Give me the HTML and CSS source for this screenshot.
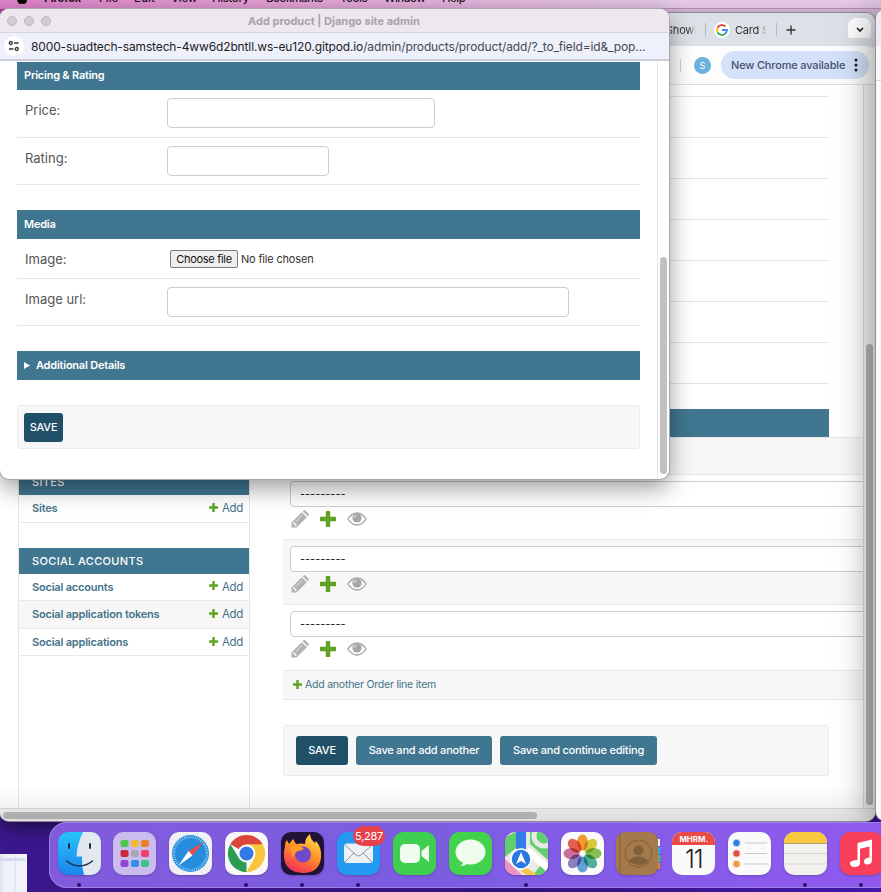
FILE: index.html
```
<!DOCTYPE html>
<html lang="en">
<head>
<meta charset="utf-8">
<title>Add product | Django site admin</title>
<link rel="stylesheet" href="styles.css">
</head>
<body>
<svg width="0" height="0" class="defs" aria-hidden="true">
  <defs>
    <symbol id="plus" viewBox="0 0 16 16"><path fill="#5fa225" d="M6.300 0h3.400q.5 0 .5.500v5.300h5.300q.5 0 .5.500v3.400q0 .5-.5.500h-5.300v5.300q0 .5-.5.500H6.300q-.5 0-.5-.5v-5.300H.5q-.5 0-.5-.5V6.300q0-.5.5-.5h5.300V.5q0-.5.5-.5z"/></symbol>
    <symbol id="pencil" viewBox="0 0 18 18"><path fill="#b2b2b2" d="M.5 12.500 10.800 2.200l5 5L5.500 17.500H.5zM11.700 1.300l.8-.8q.9-.9 1.800 0L17.500 3.700q.9.900 0 1.800l-.8.800z"/><path d="m4.500 12 7-7" stroke="#e8e8e8" fill="none"/><path d="M2 13v1.200h1.800V16H5l1-1-3-3z" fill="#f4f4f4"/></symbol>
    <symbol id="eye" viewBox="0 0 20 14"><path d="M.8 7Q5 1 10 1T19.200 7Q15 13 10 13T.8 7z" fill="none" stroke="#a5a5a5" stroke-width="1.300"/><circle cx="10" cy="6" r="4.600" fill="#a5a5a5"/><path d="M7.300 6q0-2.500 2.500-2.800" stroke="#eee" stroke-width=".9" fill="none"/></symbol>
  </defs>
</svg>
<div class="desktop">
  <nav class="menubar">
    <svg class="apple" width="10" height="12" viewBox="0 0 10 12"><path d="M5 3C3 2 0 3 0 6.500S2 12 3.500 12 5 11.500 6.500 12 10 10 10 8Q8 7 8 5.500T9.500 3.500Q8 2 5 3z"/></svg>
    <b>Firefox</b><span>File</span><span>Edit</span><span>View</span><span>History</span><span>Bookmarks</span><span>Tools</span><span>Window</span><span>Help</span>
  </nav>
  <div class="thumb"></div>

  <section class="browser">
    <header class="tabs">
      <span class="tab showing">Showing</span><i class="sep"></i>
      <svg class="google" width="12" height="12" viewBox="0 0 12 12" fill="none" stroke-width="2"><path d="M9.500 2.500A5 5 0 0 0 1.500 3.800" stroke="#ea4335"/><path d="M1.500 3.800a5 5 0 0 0 0 4.400" stroke="#fbbc05"/><path d="M1.500 8.200a5 5 0 0 0 7.700 1.600" stroke="#34a853"/><path d="M6 6h5q0 2.400-1.800 3.800" stroke="#4285f4"/></svg>
      <span class="tab card">Card S</span><i class="sep"></i>
      <svg class="newtab" width="10" height="10" viewBox="0 0 10 10"><path d="M5 .5v9M.5 5h9" stroke="#333" stroke-width="1.400"/></svg>
      <span class="chev"><svg width="8" height="6" viewBox="0 0 8 6"><path d="m1 1 3 3 3-3" fill="none" stroke="#222" stroke-width="1.700"/></svg></span>
    </header>
    <div class="toolbar">
      <i class="sep blue"></i><span class="avatar">S</span>
      <span class="update">New Chrome available <svg width="4" height="14" viewBox="0 0 4 14" fill="#1a1d33"><circle cx="2" cy="2" r="1.500"/><circle cx="2" cy="7" r="1.500"/><circle cx="2" cy="12" r="1.500"/></svg></span>
    </div>
    <div class="viewport">
      <aside class="sidebar">
        <h2>SITES</h2>
        <p><b>Sites</b><a><svg><use href="#plus"/></svg>Add</a></p>
        <h2 class="next">SOCIAL ACCOUNTS</h2>
        <p><b>Social accounts</b><a><svg><use href="#plus"/></svg>Add</a></p>
        <p class="alt"><b>Social application tokens</b><a><svg><use href="#plus"/></svg>Add</a></p>
        <p><b>Social applications</b><a><svg><use href="#plus"/></svg>Add</a></p>
      </aside>
      <main class="order">
        <div class="lines"><i></i><i></i><i></i><i></i><i></i><i></i><i></i><i></i></div>
        <div class="bar"></div>
        <div class="thead"></div>
        <div class="item"><div class="select">---------</div><div class="tools"><svg class="pencil"><use href="#pencil"/></svg><svg class="plus"><use href="#plus"/></svg><svg class="eye"><use href="#eye"/></svg></div></div>
        <div class="item alt"><div class="select">---------</div><div class="tools"><svg class="pencil"><use href="#pencil"/></svg><svg class="plus"><use href="#plus"/></svg><svg class="eye"><use href="#eye"/></svg></div></div>
        <div class="item"><div class="select">---------</div><div class="tools"><svg class="pencil"><use href="#pencil"/></svg><svg class="plus"><use href="#plus"/></svg><svg class="eye"><use href="#eye"/></svg></div></div>
        <div class="another"><svg><use href="#plus"/></svg>Add another Order line item</div>
        <div class="submit"><span class="btn dark">SAVE</span><span class="btn">Save and add another</span><span class="btn wide">Save and continue editing</span></div>
      </main>
      <div class="vtrack"><i></i></div>
    </div>
    <div class="htrack"><i></i></div>
  </section>

  <section class="edge"><i></i></section>

  <section class="popup">
    <header class="title"><i></i><i></i><i></i><b>Add product | Django site admin</b></header>
    <div class="url">
      <span class="site"><svg width="12" height="12" viewBox="0 0 12 12" fill="none" stroke="#333" stroke-width="1.300"><circle cx="2.800" cy="3" r="1.500"/><path d="M6 3h4.500M1 9h4.500"/><circle cx="8.800" cy="9" r="1.500"/></svg></span>
      <span class="address"><span class="host">8000-suadtech-samstech-4ww6d2bntll.ws-eu120.gitpod.io</span>/admin/products/product/add/?_to_field=id&amp;_pop...</span>
    </div>
    <div class="form">
      <div class="fields">
        <h3>Pricing &amp; Rating</h3>
        <div class="row"><label>Price:</label><span class="input price"></span></div>
        <div class="row"><label>Rating:</label><span class="input rating"></span></div>
        <h3 class="gap">Media</h3>
        <div class="row file"><label>Image:</label><span class="choose">Choose file</span><span class="none">No file chosen</span></div>
        <div class="row"><label>Image url:</label><span class="input link"></span></div>
        <h3 class="gap detail"><svg width="6" height="7" viewBox="0 0 6 7"><path d="M0 0v7l6-3.500z" fill="#fff"/></svg>Additional Details</h3>
        <div class="savebox"><span class="btn dark">SAVE</span></div>
      </div>
      <div class="ptrack"><i></i></div>
    </div>
  </section>

  <div class="dock">
    <div class="app on"><svg viewBox="0 0 43 43"><defs><linearGradient id="fb" x2="0" y2="1"><stop stop-color="#28c4fb"/><stop offset="1" stop-color="#1c83ec"/></linearGradient><clipPath id="rc"><rect width="43" height="43" rx="10"/></clipPath></defs><g clip-path="url(#rc)"><path fill="url(#fb)" d="M0 0h43v43H0z"/><path fill="#e3e8f0" d="M25 0Q19 12 18.500 24.500H24Q23.500 34 26 43h17V0z"/><path d="M11 12v4M32 12v4" stroke="#18334f" stroke-width="2" stroke-linecap="round"/><path d="M8.500 29q13 10 26 0" fill="none" stroke="#18334f" stroke-width="1.500" stroke-linecap="round"/></g></svg></div>
    <div class="app"><svg viewBox="0 0 43 43"><rect width="43" height="43" rx="10" fill="#cbbcee"/><g><rect x="7.500" y="8" width="8" height="7" rx="2" fill="#51c551"/><rect x="18" y="8" width="8" height="7" rx="2" fill="#f4b92f"/><rect x="28" y="8" width="8" height="7" rx="2" fill="#ed812b"/><rect x="7.500" y="18" width="8" height="7" rx="2" fill="#c92838"/><rect x="18" y="18" width="8" height="7" rx="2" fill="#a9a7b5"/><rect x="28" y="18" width="8" height="7" rx="2" fill="#ed3f67"/><rect x="7.500" y="28" width="8" height="7" rx="2" fill="#9247cf"/><rect x="18" y="28" width="8" height="7" rx="2" fill="#328ee5"/><rect x="28" y="28" width="8" height="7" rx="2" fill="#38c488"/></g></svg></div>
    <div class="app"><svg viewBox="0 0 43 43"><rect width="43" height="43" rx="10" fill="#f1f1f5"/><circle cx="21.500" cy="21.500" r="18.500" fill="#258ddb"/><circle cx="21.500" cy="21.500" r="16.500" fill="none" stroke="#b8e0fa" stroke-width="2.500" stroke-dasharray=".7 1.450"/><path fill="#ee4b48" d="M34.500 10 19.500 19l4 4.500z"/><path fill="#fff" d="M9.500 33.500 19.500 19l4 4.500z"/></svg></div>
    <div class="app on"><svg viewBox="0 0 43 43"><rect width="43" height="43" rx="10" fill="#f8f8fa"/><path fill="#db453a" d="M21.500 21.500 5.400 12.200a18.600 18.600 0 0 1 32.200 0z"/><path fill="#2c9d50" d="M21.500 21.500 21.500 40.100A18.600 18.600 0 0 1 5.400 12.200l8 13z"/><path fill="#f7c63b" d="M21.500 12.200h16.100a18.600 18.600 0 0 1-16.100 27.900l8-14z"/><circle cx="21.500" cy="21.500" r="9" fill="#fff"/><circle cx="21.500" cy="21.500" r="7" fill="#3478e8"/></svg></div>
    <div class="app on"><svg viewBox="0 0 43 43"><defs><linearGradient id="ff" x1=".8" x2=".3" y2="1"><stop stop-color="#ffe34a"/><stop offset=".5" stop-color="#ff8b25"/><stop offset="1" stop-color="#f42c5d"/></linearGradient></defs><rect width="43" height="43" rx="10" fill="#211338"/><path fill="url(#ff)" d="M4 14q0-4 2-6l2 4 4-5 3 5q6-1 9 0 0-6 5-10 0 5 5 9l1-2q6 7 5 17-2 15-18 15Q4 40 3 25q-.5-5 1-11z"/><circle cx="22" cy="22.500" r="8" fill="#7049c9"/><path fill="#ff9b2b" d="M9 15q8-4 14 2-3 2-6 2-4 2-5 7z"/></svg></div>
    <div class="app on mail"><svg viewBox="0 0 43 43"><rect width="43" height="43" rx="10" fill="#2499f2"/><rect x="7" y="11.500" width="29" height="19.500" rx="3" fill="#eef1f5"/><path d="m8 13 11 10q2.500 2 5 0l11-10M8 30l9-9M35 30l-9-9" fill="none" stroke="#8d969e"/></svg><em>5,287</em></div>
    <div class="app"><svg viewBox="0 0 43 43"><rect width="43" height="43" rx="10" fill="#3fcf50"/><rect x="7" y="12" width="20" height="19" rx="5" fill="#effced"/><path fill="#effced" d="m28.500 19 7.500-6v17l-7.500-6z"/></svg></div>
    <div class="app"><svg viewBox="0 0 43 43"><rect width="43" height="43" rx="10" fill="#43d24e"/><ellipse cx="21.500" cy="20" rx="15" ry="12.500" fill="#effced"/><path fill="#effced" d="M14 28q1 4-3 6 6 0 9-4z"/></svg></div>
    <div class="app on"><svg viewBox="0 0 43 43"><g clip-path="url(#rc)"><path fill="#ebe9e4" d="M0 0h43v43H0z"/><path fill="#60cf6c" d="M0 5v20L11 16V0zM25 0h18v28L25 12zM28 43l7-9 8 5v4z"/><path fill="#ed91c1" d="M0 27v16h17z"/><path d="M22 18 43 36" stroke="#fff" stroke-width="7"/><path d="m18 37 12 8" stroke="#f6c847" stroke-width="6"/><circle cx="39" cy="4" r="10" fill="none" stroke="#e8e8e8" stroke-width="5"/><path fill="#317ce9" d="M11 0h10v22H11z"/><circle cx="16" cy="27" r="10" fill="#2b78e4" stroke="#fff" stroke-width="1.500"/><path fill="#fff" d="m16 20 5 12-5-3-5 3z"/></g></svg></div>
    <div class="app"><svg viewBox="0 0 43 43"><rect width="43" height="43" rx="10" fill="#fafafa"/><g class="petals" transform="translate(21.500 21.500)"><ellipse cy="-11" rx="5.500" ry="8" fill="#f39a27"/><ellipse cy="-11" rx="5.500" ry="8" fill="#d7cc31" transform="rotate(45)"/><ellipse cy="-11" rx="5.500" ry="8" fill="#82bf50" transform="rotate(90)"/><ellipse cy="-11" rx="5.500" ry="8" fill="#48ae98" transform="rotate(135)"/><ellipse cy="-11" rx="5.500" ry="8" fill="#5d9fd5" transform="rotate(180)"/><ellipse cy="-11" rx="5.500" ry="8" fill="#8a7bc1" transform="rotate(225)"/><ellipse cy="-11" rx="5.500" ry="8" fill="#c8699b" transform="rotate(270)"/><ellipse cy="-11" rx="5.500" ry="8" fill="#ea594a" transform="rotate(315)"/></g></svg></div>
    <div class="app"><svg viewBox="0 0 43 43"><path fill="#eee" d="M39 7h5v7h-5z"/><path fill="#42a6da" d="M39 15h5.500v7H39z"/><path fill="#58b96d" d="M39 23h5.500v7H39z"/><path fill="#e78338" d="M39 31h5v6h-5z"/><rect width="42" height="43" rx="9" fill="#a47a4a"/><path d="M4 2v39" stroke="#805b36"/><circle cx="22.500" cy="21.500" r="13.500" fill="none" stroke="#80603a"/><circle cx="22.500" cy="18.500" r="5" fill="#80603a"/><path fill="#80603a" d="M12 29q10.500-9 21 0-9 8-21 0z"/></svg></div>
    <div class="app cal"><span>MHRM.</span><strong>11</strong></div>
    <div class="app"><svg viewBox="0 0 43 43"><rect width="43" height="43" rx="10" fill="#fafafa"/><path d="M17 11h22M17 21.500h22M17 32h22" stroke="#c9c9cd"/><g stroke-opacity=".35" stroke-width="2"><circle cx="8.500" cy="11" r="3" fill="#287fe3" stroke="#287fe3"/><circle cx="8.500" cy="21.500" r="3" fill="#df4e43" stroke="#df4e43"/><circle cx="8.500" cy="32" r="3" fill="#ec9a3d" stroke="#ec9a3d"/></g></svg></div>
    <div class="app on"><svg viewBox="0 0 43 43"><g clip-path="url(#rc)"><path fill="#f2f0ed" d="M0 0h43v43H0z"/><path fill="#f7c73d" d="M0 0h43v11H0z"/><path d="M0 11.500h43" stroke="#b6a178"/><path d="M0 21.500h43M0 32h43" stroke="#d7d5d2"/></g></svg></div>
    <div class="app on"><svg viewBox="0 0 43 43"><rect width="43" height="43" rx="10" fill="#f8405b"/><path fill="#fff" d="M17.500 11 32 7.500V28q0 4-4 4.500T24 29.500t5.500-4V14.500L20 16.700V31q0 3.500-4.500 4T10 32t7.500-4z"/></svg></div>
  </div>
</div>
</body>
</html>
```
FILE: styles.css
```
* { box-sizing: border-box; }
body { margin: 0; font-family: Inter, "Liberation Sans", sans-serif; overflow: hidden; }
h2, h3, p { margin: 0; }
i, em { font-style: normal; }
i { display: block; flex: none; }
svg { display: block; flex: none; }
.defs { position: absolute; }
.desktop { position: relative; width: 881px; height: 892px; overflow: hidden; background: linear-gradient(90deg, #bd369f, #d76bb2 45%, #d8bfd8 60%) 0 0 / 100% 60px no-repeat, linear-gradient(90deg, #3a188c, #32147e 60%, #4216aa); }

.menubar { position: relative; height: 9px; overflow: hidden; background: linear-gradient(90deg, #df84cb, #e6a5d8 35%, #e5c9e5 75%); border-bottom: 1px solid #c58ac0; font-size: 11.500px; line-height: 14px; color: #271528; }
.menubar > * { position: absolute; top: -9px; font-weight: 500; }
.menubar b { left: 44px; font-weight: 700; letter-spacing: -.3px; }
.menubar .apple { left: 17px; top: -8px; }
.menubar span:nth-of-type(1) { left: 99px; }
.menubar span:nth-of-type(2) { left: 134px; }
.menubar span:nth-of-type(3) { left: 171px; letter-spacing: -.3px; }
.menubar span:nth-of-type(4) { left: 212px; letter-spacing: -.4px; }
.menubar span:nth-of-type(5) { left: 266px; letter-spacing: -.6px; }
.menubar span:nth-of-type(6) { left: 340px; letter-spacing: -.5px; }
.menubar span:nth-of-type(7) { left: 384px; letter-spacing: -.6px; }
.menubar span:nth-of-type(8) { left: 442px; letter-spacing: -.5px; }
.thumb { position: absolute; left: 0; top: 854px; width: 27px; height: 38px; border: solid #f4f2fc; border-width: 1px 2px 0 0; background: linear-gradient(#d5dcf0 0 3px, #0000 3px) 0 3px no-repeat, linear-gradient(90deg, #e2e4e8 0 3px, #eef1fa 3px 15px, #dde3f2 15px 16px, #f2f4fb 16px); }

.browser { position: absolute; left: 0; top: 13px; width: 875px; height: 808px; display: flex; flex-direction: column; border-radius: 9px; overflow: hidden; background: #fff; box-shadow: 0 0 0 1px #8b8799, 0 6px 16px rgba(0,0,0,.5); }
.browser::after { content: ""; position: absolute; inset: auto 0 0 0; height: 34px; pointer-events: none; background: linear-gradient(#0000, rgba(0,0,0,.09)); }
.tabs { height: 33px; display: flex; align-items: center; padding-left: 666px; background: #dce1e7; font-size: 11px; color: #333; flex: none; }
.tab { white-space: nowrap; overflow: hidden; letter-spacing: -.2px; -webkit-mask-image: linear-gradient(90deg, #000 75%, transparent); mask-image: linear-gradient(90deg, #000 75%, transparent); }
.showing { width: 30px; }
.card { width: 32px; margin-left: 7px; }
.sep { width: 1px; height: 13px; margin-left: 9px; background: #b5b9c3; }
.google { margin-left: 10px; box-shadow: 0 0 0 2px #fff; border-radius: 50%; background: #fff; }
.newtab { margin-left: 9px; }
.chev { display: grid; place-items: center; width: 23px; height: 24px; margin-left: 52px; border-radius: 8px; background: #fff; }
.toolbar { height: 38px; flex: none; display: flex; align-items: center; padding-left: 671px; background: #fdfdfe; border-radius: 8px 8px 0 0; box-shadow: 0 -9px 0 -1px #dce1e7; }
.toolbar .blue { background: #c5d4f0; }
.avatar { width: 17px; height: 17px; margin-left: 13px; border-radius: 50%; background: #69b1de; color: #fff; text-align: center; font-size: 9px; line-height: 17px; }
.update { display: flex; align-items: center; justify-content: space-between; width: 148px; height: 28px; margin-left: 10px; padding: 0 11px 0 10px; border-radius: 14px; background: #d3e1fa; color: #4a5069; font-size: 11px; letter-spacing: -.17px; font-weight: 500; white-space: nowrap; }
.viewport { position: relative; height: 724px; flex: none; display: flex; border-top: 1px solid #dedede; background: #fff; }
.sidebar { width: 232px; margin-left: 18px; padding-top: 384px; border: solid #e6e6e6; border-width: 0 1px; }
.sidebar h2 { height: 26px; padding-left: 13px; background: #417690; color: #fff; font-size: 11px; line-height: 26px; font-weight: 500; letter-spacing: .05px; }
.sidebar h2.next { margin-top: 25px; }
.sidebar p { display: flex; justify-content: space-between; align-items: center; height: 27.600px; padding: 0 6px 0 13px; border-bottom: 1px solid #e9e9e9; color: #447289; font-size: 11px; }
.sidebar b { font-weight: 600; letter-spacing: -.2px; }
.sidebar a { display: flex; align-items: center; gap: 4px; font-size: 11.500px; letter-spacing: -.3px; }
.sidebar a svg { width: 9px; height: 9px; margin-top: -2px; }
.sidebar h2 { letter-spacing: .35px; }
.alt { background: #f7f7f7; }
.order { width: 580px; margin-left: 33px; overflow: hidden; }
.lines { width: 546px; height: 324px; padding-top: 11px; }
.lines i { height: 1px; margin-bottom: 40px; background: #e4e4e4; }
.bar { width: 546px; height: 28px; background: #417690; }
.thead { height: 38px; background: #f7f7f7; border: solid #e7e7e7; border-width: 1px 0; }
.item { height: 65.200px; padding: 6px 0 0 7px; border-bottom: 1px solid #e8e8e8; }
.select { width: 600px; height: 26px; padding-left: 9px; border: 1px solid #ccc; border-radius: 4px; background: #fff; font-size: 11px; line-height: 25px; letter-spacing: 0; color: #222; }
.tools { display: flex; align-items: center; height: 24px; padding-left: 1px; }
.pencil { width: 18px; height: 18px; }
.plus { width: 16px; height: 16px; margin-left: 11px; }
.eye { width: 20px; height: 14px; margin-left: 11px; }
.another { display: flex; align-items: center; gap: 3px; height: 29px; padding-left: 10px; background: #f7f7f7; border-bottom: 1px solid #e8e8e8; color: #447289; font-size: 10.500px; letter-spacing: -.22px; }
.another svg { width: 9px; height: 9px; }
.submit { display: flex; gap: 8px; width: 546px; height: 51px; margin-top: 25px; padding: 10px 12px; border: 1px solid #e9e9e9; border-radius: 3px; background: #f7f7f7; }
.btn { height: 29px; width: 136px; border-radius: 3px; background: #417690; color: #fff; text-align: center; font-size: 11px; line-height: 29px; font-weight: 500; letter-spacing: -.2px; white-space: nowrap; }
.btn.wide { width: 157px; }
.submit .dark { width: 52px; }
.btn.dark { background: #205067; }
.vtrack { width: 12px; height: 723px; background: #f7f7f7; border-left: 1px solid #ddd; }
.vtrack i { width: 7px; height: 461px; margin: 259px 0 0 2px; border-radius: 4px; background: #b9b9b9; }
.htrack { height: 13px; flex: none; padding: 3px 0 0 3px; border-top: 1px solid #ddd; background: #f4f4f4; }
.htrack i { width: 534px; height: 7px; border-radius: 4px; background: #bdbdbd; }

.edge { position: absolute; left: 876px; top: 10px; width: 25px; height: 810px; border-radius: 8px; background: linear-gradient(#f0e9f1 0 36px, #faf9fb 36px); box-shadow: 0 0 0 1px #8f8c96, 0 6px 36px 2px rgba(0,0,0,.5); }
.edge i { width: 20px; height: 1px; margin-top: 70px; background: #d5d5d5; }

.popup { position: absolute; left: 0; top: 9px; width: 669px; height: 470px; display: flex; flex-direction: column; overflow: hidden; border-radius: 9px; background: #fff; box-shadow: 0 0 0 1px #aaa7ad, 0 8px 24px rgba(0,0,0,.42); }
.title { height: 24px; flex: none; display: flex; align-items: center; gap: 7px; padding-left: 7px; background: #eee7ef; border-bottom: 1px solid #d9d3de; }
.title i { width: 10px; height: 10px; border-radius: 50%; background: #d2cdd3; border: 1px solid #bbb5bc; }
.title b { flex: 1; padding-right: 59px; text-align: center; font-size: 11px; font-weight: 700; color: #a9a2aa; }
.url { height: 28px; flex: none; display: flex; align-items: center; background: #eef1fb; border-bottom: 2px solid #c9ced8; }
.site { display: grid; place-items: center; width: 20px; height: 20px; margin-left: 4px; border-radius: 50%; background: #fff; }
.address { margin-left: 7px; color: #45484e; font-size: 12px; letter-spacing: -.135px; white-space: nowrap; }
.host { color: #1e2023; }
.form { display: flex; flex: 1; }
.fields { width: 623px; margin: 1px 17px 0; flex: none; }
.fields h3 { height: 28px; padding-left: 7px; background: #417690; color: #fff; font-size: 11px; line-height: 27px; font-weight: 600; letter-spacing: -.22px; }
.fields h3.gap { margin-top: 25px; height: 29px; line-height: 29px; }
.fields h3.detail { display: flex; align-items: center; gap: 6px; margin-top: 25px; }
.row { display: flex; align-items: flex-start; height: 47.500px; padding: 8px 0 0 8px; border-bottom: 1px solid #e7e7e7; }
.row label { width: 142px; flex: none; color: #555; font-size: 13px; line-height: 25px; }
.input { height: 30px; border: 1px solid #ccc; border-radius: 4px; }
.price { width: 268px; }
.rating { width: 162px; }
.link { width: 402px; }
.file { height: 40px; }
.file + .row { height: 47px; }
.choose { width: 68px; height: 18px; margin: 3px 3px 0 3px; border: 1px solid #7c7c7c; border-radius: 2px; background: #efefef; color: #111; font-size: 11px; line-height: 16px; letter-spacing: -.3px; text-align: center; white-space: nowrap; }
.none { margin-top: 4px; font-size: 11px; line-height: 16px; letter-spacing: -.18px; color: #333; }
.savebox { height: 44px; margin-top: 25px; padding: 7px 6px; border: 1px solid #ebebeb; border-radius: 3px; background: #f7f7f7; }
.savebox .btn { display: block; width: 39px; height: 29px; }
.ptrack { width: 12px; border-left: 1px solid #e7e7e7; }
.ptrack i { width: 7px; height: 217px; margin: 196px 0 0 2px; border-radius: 4px; background: #c1c1c1; }

.dock { position: absolute; left: 49px; top: 822px; width: 860px; height: 66px; display: flex; gap: 12.900px; padding: 10px 0 0 8.500px; border-radius: 18px; background: linear-gradient(90deg, #825bdc, #7b5de2 45%, #9259f0); box-shadow: inset 0 0 0 1px #9d82e8; }
.app { position: relative; width: 43px; height: 43px; flex: none; }
.app > svg { width: 43px; height: 43px; overflow: visible; filter: drop-shadow(0 1px 1px rgba(0,0,0,.2)); }
.app.on::after { content: ""; position: absolute; left: 19px; top: 50.500px; width: 4px; height: 4px; border-radius: 50%; background: #2a0c70; }
.mail em { position: absolute; left: 16px; top: -6px; width: 32px; height: 20px; border-radius: 10px; background: #e7424b; color: #fff; font-size: 11px; line-height: 20px; letter-spacing: -.3px; text-align: center; }
.petals { mix-blend-mode: multiply; opacity: .95; }
.petals ellipse { mix-blend-mode: multiply; }
.cal { overflow: hidden; border-radius: 10px; background: #fafafa; text-align: center; }
.cal span { display: block; height: 13px; background: #ea4b47; color: #fff; font-size: 8px; font-weight: 700; line-height: 14px; }
.cal strong { display: block; font-size: 25px; line-height: 28px; font-weight: 300; color: #222; letter-spacing: -1px; }
```
